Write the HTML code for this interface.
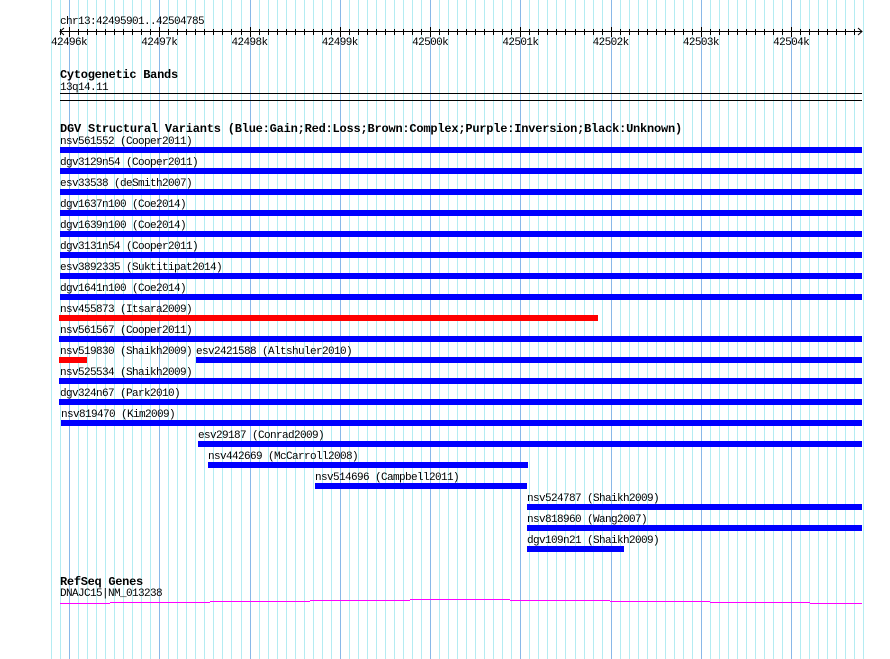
<!DOCTYPE html>
<html><head><meta charset="utf-8"><style>
html,body{margin:0;padding:0;background:#fff;}
svg{display:block}
text{font-family:"Liberation Mono","DejaVu Sans Mono",monospace;font-size:11px;letter-spacing:-0.6px;fill:#000}
.b{font-weight:bold;font-size:12px;letter-spacing:-0.2px}
</style></head><body>
<svg id="s" width="890" height="659" xmlns="http://www.w3.org/2000/svg">
<g id="grid"></g>
<g id="axis" stroke="#000" stroke-width="1"></g>
<text x="60" y="24">chr13:42495901..42504785</text>
<g id="rl"></g>
<text class="b" x="60" y="78" textLength="118">Cytogenetic Bands</text>
<text x="60" y="90">13q14.11</text>
<rect x="60" y="93" width="802" height="1" fill="#000"/>
<rect x="60" y="100" width="802" height="1" fill="#000"/>
<text class="b" x="60" y="132" textLength="622">DGV Structural Variants (Blue:Gain;Red:Loss;Brown:Complex;Purple:Inversion;Black:Unknown)</text>
<g id="rows"></g>
<text class="b" x="60" y="585" textLength="83">RefSeq Genes</text>
<text x="60" y="596">DNAJC15|NM_013238</text>
<g fill="#ff00ff">
<rect x="60" y="603" width="50" height="1"/>
<rect x="110" y="602" width="100" height="1"/>
<rect x="210" y="601" width="100" height="1"/>
<rect x="310" y="600" width="100" height="1"/>
<rect x="410" y="599" width="100" height="1"/>
<rect x="510" y="600" width="100" height="1"/>
<rect x="610" y="601" width="100" height="1"/>
<rect x="710" y="602" width="100" height="1"/>
<rect x="810" y="603" width="52" height="1"/>
</g>
</svg>
<script>
var NS="http://www.w3.org/2000/svg";
function el(p,t,a,txt){var e=document.createElementNS(NS,t);for(var k in a)e.setAttribute(k,a[k]);if(txt)e.textContent=txt;document.getElementById(p).appendChild(e);return e;}
var step=90.27/10;
for(var n=-2;n<=88;n++){
 var x=Math.round(69+step*n)+0.5;
 var maj=(n%10===0);
 el("grid","line",{x1:x,y1:0,x2:x,y2:659,stroke:maj?"#8ab8e8":"#b4ecf2","stroke-width":1});
 if(x>=60&&x<=862){el("axis","line",{x1:x,y1:maj?27:29,x2:x,y2:maj?37:35});}
}
el("axis","line",{x1:60,y1:31.5,x2:862,y2:31.5});
el("axis","polyline",{points:"64,28 60,31.5 64,35",fill:"none"});
el("axis","polyline",{points:"858,28 862,31.5 858,35",fill:"none"});
for(var k=0;k<9;k++){var cx=69+90.27*k;el("rl","text",{x:cx,y:45,"text-anchor":"middle"},(42496+k)+"k");}
var rows=[
["nsv561552 (Cooper2011)",60,862,"#0000ff"],
["dgv3129n54 (Cooper2011)",60,862,"#0000ff"],
["esv33538 (deSmith2007)",60,862,"#0000ff"],
["dgv1637n100 (Coe2014)",60,862,"#0000ff"],
["dgv1639n100 (Coe2014)",60,862,"#0000ff"],
["dgv3131n54 (Cooper2011)",60,862,"#0000ff"],
["esv3892335 (Suktitipat2014)",60,862,"#0000ff"],
["dgv1641n100 (Coe2014)",60,862,"#0000ff"],
["nsv455873 (Itsara2009)",59,598,"#ff0000"],
["nsv561567 (Cooper2011)",59,862,"#0000ff"],
["nsv519830 (Shaikh2009)",59,87,"#ff0000",["esv2421588 (Altshuler2010)",196,862]],
["nsv525534 (Shaikh2009)",59,862,"#0000ff"],
["dgv324n67 (Park2010)",59,862,"#0000ff"],
["nsv819470 (Kim2009)",61,862,"#0000ff"],
["esv29187 (Conrad2009)",198,862,"#0000ff"],
["nsv442669 (McCarroll2008)",208,528,"#0000ff"],
["nsv514696 (Campbell2011)",315,527,"#0000ff"],
["nsv524787 (Shaikh2009)",527,862,"#0000ff"],
["nsv818960 (Wang2007)",527,862,"#0000ff"],
["dgv109n21 (Shaikh2009)",527,624,"#0000ff"]];
rows.forEach(function(r,i){
 var by=147+21*i;
 el("rows","text",{x:Math.max(r[1],60),y:by-3},r[0]);
 el("rows","rect",{x:r[1],y:by,width:r[2]-r[1],height:6,fill:r[3]});
 if(r[4]){el("rows","text",{x:r[4][1],y:by-3},r[4][0]);el("rows","rect",{x:r[4][1],y:by,width:r[4][2]-r[4][1],height:6,fill:"#0000ff"});}
});
</script>
</body></html>
